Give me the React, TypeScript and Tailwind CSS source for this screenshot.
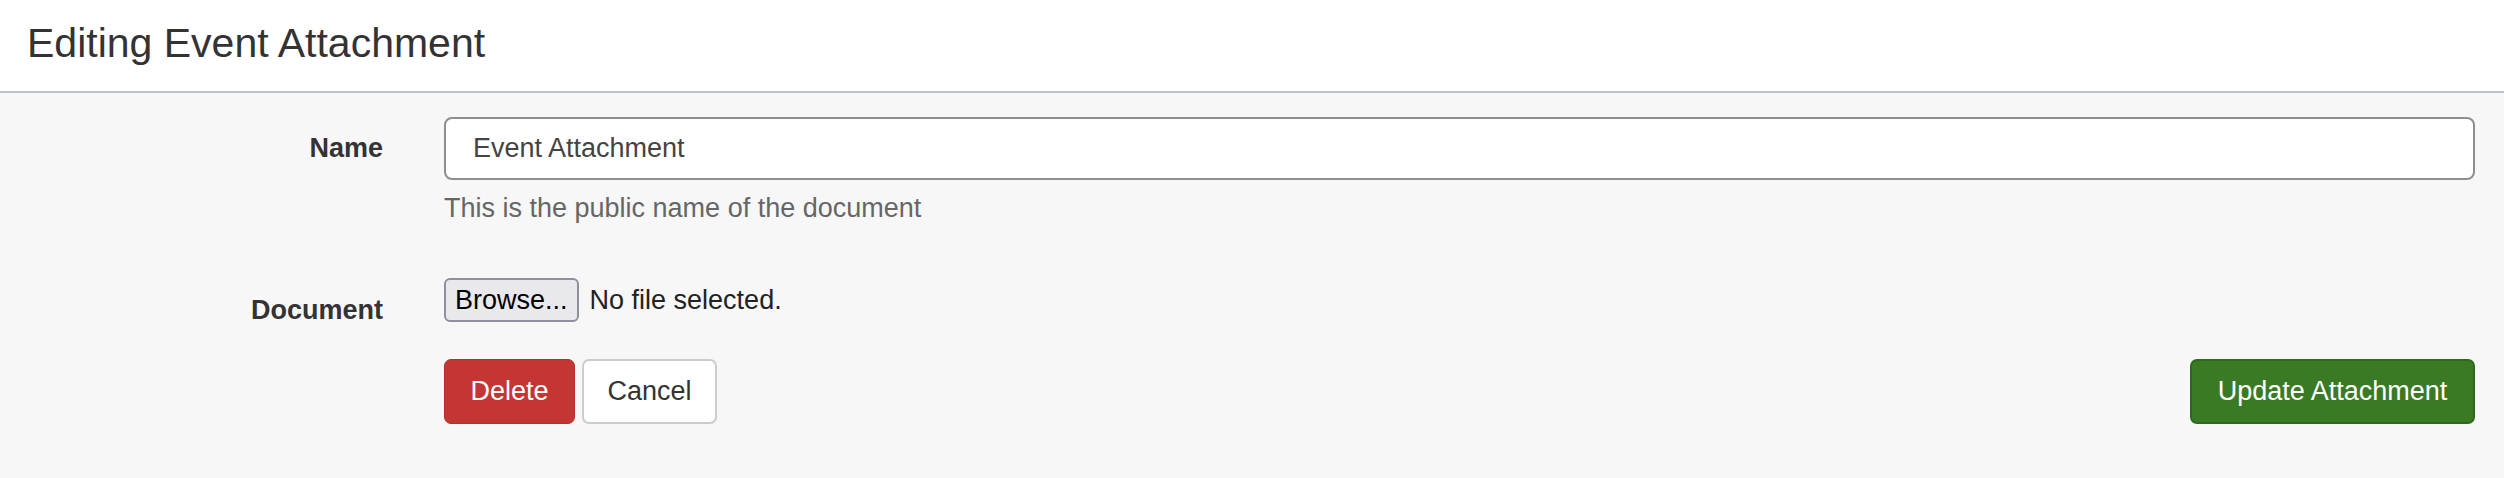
import React from 'react';

export default function App() {
  return (
    <div className="min-h-[478px] bg-[#f7f7f7] font-['Liberation_Sans',Arial,sans-serif] text-[27px] text-[#333]">
      {/* Header */}
      <div className="h-[93px] bg-white border-b-2 border-[#b9c4cd] flex items-center pl-[27px] pb-[4px]">
        <h1 className="text-[41px] leading-none text-[#333]">Editing Event Attachment</h1>
      </div>

      <form className="pt-[24px] pr-[29px] pb-[54px]">
        {/* Name */}
        <div className="flex items-start">
          <label className="w-[383px] shrink-0 h-[63px] flex items-center justify-end font-bold">Name</label>
          <div className="ml-[61px] flex-1">
            <input
              type="text"
              defaultValue="Event Attachment"
              className="w-full h-[63px] bg-white border-2 border-[#8f8f8f] rounded-[8px] pl-[27px] text-[27px] text-[#444] outline-none"
            />
            <p className="mt-[12px] leading-[32px] text-[#666]">This is the public name of the document</p>
          </div>
        </div>

        {/* Document */}
        <div className="flex items-start mt-[54px]">
          <label className="w-[383px] shrink-0 pt-[16px] text-right font-bold leading-[32px]">Document</label>
          <div className="ml-[61px] flex-1">
            <div className="flex items-center h-[44px]">
              <button
                type="button"
                className="h-[44px] px-[9px] bg-[#e9e9ed] border-2 border-[#8f8f9d] rounded-[6px] text-black leading-none"
              >
                Browse...
              </button>
              <span className="ml-[11px] text-[#222]">No file selected.</span>
            </div>

            <div className="flex items-center mt-[37px]">
              <button
                type="button"
                className="h-[65px] w-[131px] bg-[#c43633] border border-[#b3302d] rounded-[7px] text-white"
              >
                Delete
              </button>
              <button
                type="button"
                className="ml-[7px] h-[65px] w-[135px] bg-white border-2 border-[#cccccc] rounded-[7px] text-[#333]"
              >
                Cancel
              </button>
              <button
                type="button"
                className="ml-auto h-[65px] w-[285px] bg-[#3b7a24] border-2 border-[#2f6a1c] rounded-[7px] text-white"
              >
                Update Attachment
              </button>
            </div>
          </div>
        </div>
      </form>
    </div>
  );
}
